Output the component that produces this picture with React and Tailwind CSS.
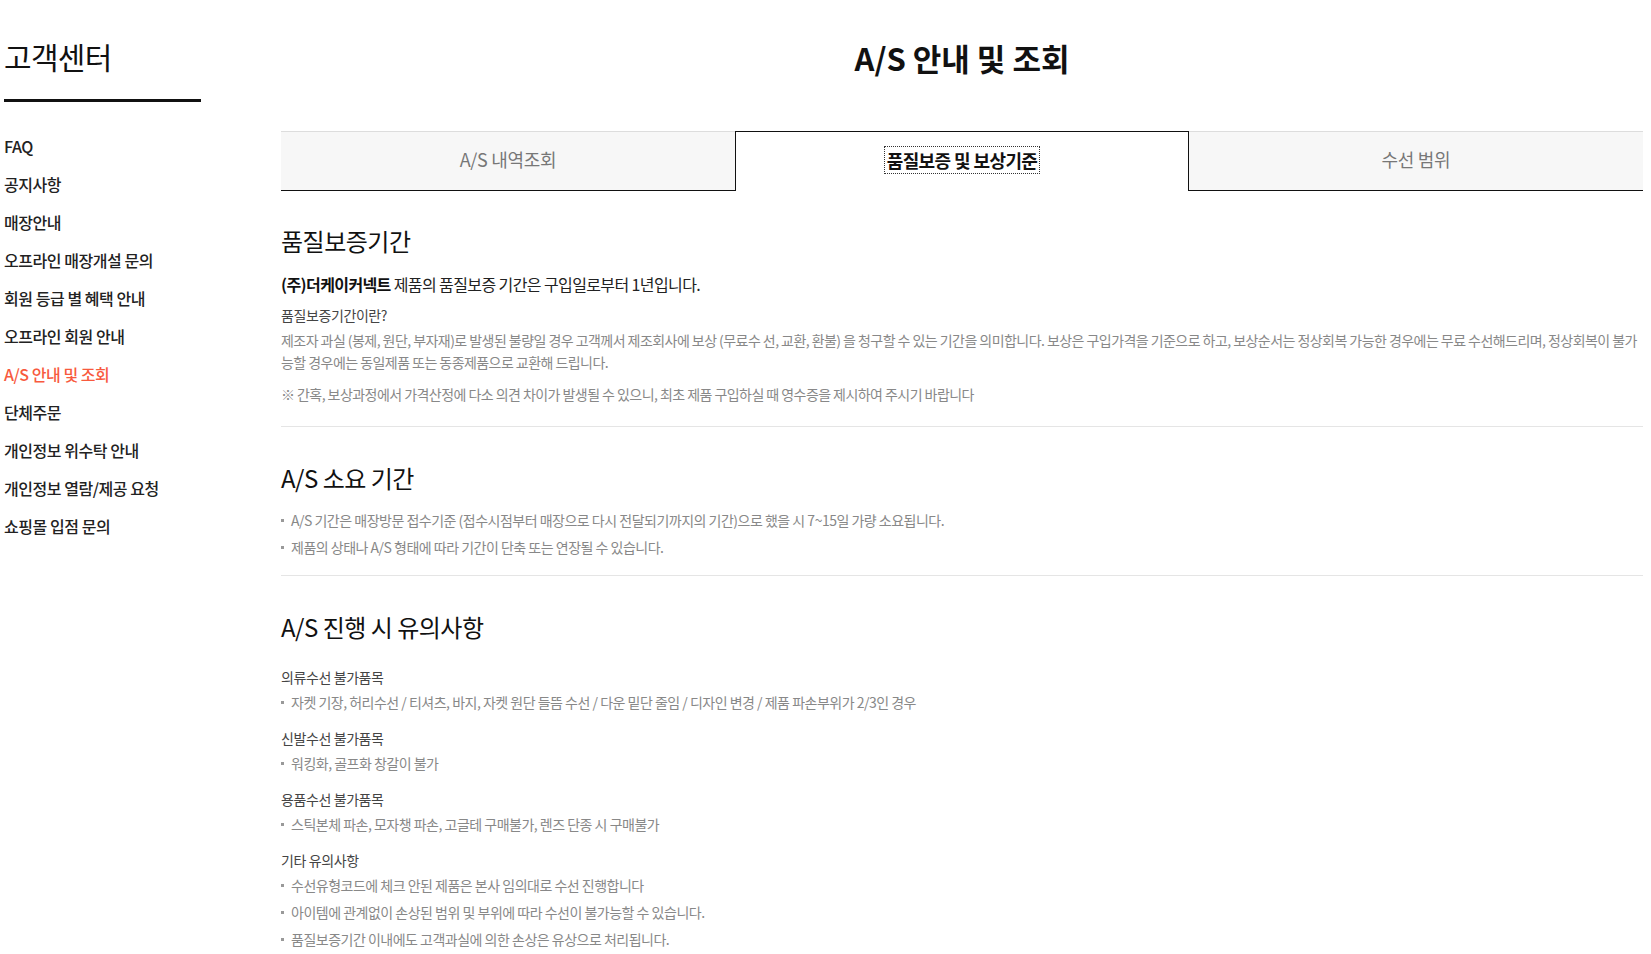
import React from "react";

const FONT = { fontFamily: '"Noto Sans CJK KR", "Noto Sans", sans-serif' };

const navItems = [
  "FAQ",
  "공지사항",
  "매장안내",
  "오프라인 매장개설 문의",
  "회원 등급 별 혜택 안내",
  "오프라인 회원 안내",
  "A/S 안내 및 조회",
  "단체주문",
  "개인정보 위수탁 안내",
  "개인정보 열람/제공 요청",
  "쇼핑몰 입점 문의",
];

function Bullet({ children }) {
  return (
    <li className="flex items-start leading-[27px]">
      <span className="mt-[12px] mr-[7px] h-[3px] w-[3px] shrink-0 bg-[#999]" />
      <span>{children}</span>
    </li>
  );
}

function SubGroup({ title, items }) {
  return (
    <div>
      <div className="text-[14px] leading-[20px] tracking-[-0.4px] text-[#444]">{title}</div>
      <ul className="mt-[2px] text-[14px] tracking-[-0.5px] text-[#888]">
        {items.map((t) => (
          <Bullet key={t}>{t}</Bullet>
        ))}
      </ul>
    </div>
  );
}

export default function App() {
  return (
    <div style={FONT} className="flex min-h-[954px] bg-white pl-[4px] pr-[8px] text-[#222]">
      <aside className="w-[197px] shrink-0 pt-[38px]">
        <h2 className="border-b-[3px] border-[#111] pb-[25px] text-[30px] leading-[36px] tracking-[-0.7px] text-[#111]">
          고객센터
        </h2>
        <ul className="mt-[25px]">
          {navItems.map((t) => (
            <li
              key={t}
              className={
                "h-[38px] text-[16px] leading-[38px] font-medium tracking-[-0.45px] " +
                (t === "A/S 안내 및 조회" ? "text-[#f85a3e]" : "text-[#222]")
              }
            >
              {t}
            </li>
          ))}
        </ul>
      </aside>

      <main className="ml-[80px] flex-1 pt-[38px]">
        <h1 className="text-center text-[31px] leading-[40px] font-semibold text-[#111]">
          A/S 안내 및 조회
        </h1>

        <div className="mt-[53px] grid h-[60px] grid-cols-3">
          <div className="flex items-center justify-center border-t border-b border-t-[#ddd] border-b-[#111] bg-[#f7f7f7] pb-[3px] text-[18px] tracking-[-0.3px] text-[#777]">
            A/S 내역조회
          </div>
          <div className="flex items-center justify-center border-x border-t border-[#111] bg-white pb-[3px]">
            <span className="px-[2px] py-[2px] text-[18px] leading-[22px] font-bold tracking-[-0.6px] text-[#111] outline-1 outline-dotted outline-[#333]">
              품질보증 및 보상기준
            </span>
          </div>
          <div className="flex items-center justify-center border-t border-b border-t-[#ddd] border-b-[#111] bg-[#f7f7f7] pb-[3px] text-[18px] tracking-[-0.3px] text-[#777]">
            수선 범위
          </div>
        </div>

        <section className="border-b border-[#e5e5e5] pt-[34px] pb-[21px]">
          <h3 className="text-[24px] leading-[32px] tracking-[-0.5px] text-[#111]">품질보증기간</h3>
          <p className="mt-[16px] text-[16px] leading-[22px] tracking-[-0.6px] text-[#222]">
            <b className="font-bold text-[#111]">(주)더케이커넥트</b> 제품의 품질보증 기간은 구입일로부터 1년입니다.
          </p>
          <div className="mt-[10px] text-[14px] leading-[20px] tracking-[-0.4px] text-[#444]">품질보증기간이란?</div>
          <p className="mt-[4px] text-[14px] leading-[22px] tracking-[-0.55px] text-[#888]">
            제조자 과실 (봉제, 원단, 부자재)로 발생된 불량일 경우 고객께서 제조회사에 보상 (무료수 선, 교환, 환불) 을 청구할 수 있는 기간을 의미합니다. 보상은 구입가격을 기준으로 하고, 보상순서는 정상회복 가능한 경우에는 무료 수선해드리며, 정상회복이 불가능할 경우에는 동일제품 또는 동종제품으로 교환해 드립니다.
          </p>
          <p className="mt-[10px] text-[14px] leading-[22px] tracking-[-0.55px] text-[#888]">
            ※ 간혹, 보상과정에서 가격산정에 다소 의견 차이가 발생될 수 있으니, 최초 제품 구입하실 때 영수증을 제시하여 주시기 바랍니다
          </p>
        </section>

        <section className="border-b border-[#e5e5e5] pt-[35px] pb-[14px]">
          <h3 className="text-[24px] leading-[32px] tracking-[-0.5px] text-[#111]">A/S 소요 기간</h3>
          <ul className="mt-[13px] text-[14px] tracking-[-0.5px] text-[#888]">
            <Bullet>A/S 기간은 매장방문 접수기준 (접수시점부터 매장으로 다시 전달되기까지의 기간)으로 했을 시 7~15일 가량 소요됩니다.</Bullet>
            <Bullet>제품의 상태나 A/S 형태에 따라 기간이 단축 또는 연장될 수 있습니다.</Bullet>
          </ul>
        </section>

        <section className="pt-[35px] pb-[10px]">
          <h3 className="text-[24px] leading-[32px] tracking-[-0.5px] text-[#111]">A/S 진행 시 유의사항</h3>
          <div className="flex flex-col gap-[12px] pt-[24px]">
            <SubGroup
              title="의류수선 불가품목"
              items={["자켓 기장, 허리수선 / 티셔츠, 바지, 자켓 원단 들뜸 수선 / 다운 밑단 줄임 / 디자인 변경 / 제품 파손부위가 2/3인 경우"]}
            />
            <SubGroup title="신발수선 불가품목" items={["워킹화, 골프화 창갈이 불가"]} />
            <SubGroup title="용품수선 불가품목" items={["스틱본체 파손, 모자챙 파손, 고글테 구매불가, 렌즈 단종 시 구매불가"]} />
            <SubGroup
              title="기타 유의사항"
              items={[
                "수선유형코드에 체크 안된 제품은 본사 임의대로 수선 진행합니다",
                "아이템에 관계없이 손상된 범위 및 부위에 따라 수선이 불가능할 수 있습니다.",
                "품질보증기간 이내에도 고객과실에 의한 손상은 유상으로 처리됩니다.",
              ]}
            />
          </div>
        </section>
      </main>
    </div>
  );
}
